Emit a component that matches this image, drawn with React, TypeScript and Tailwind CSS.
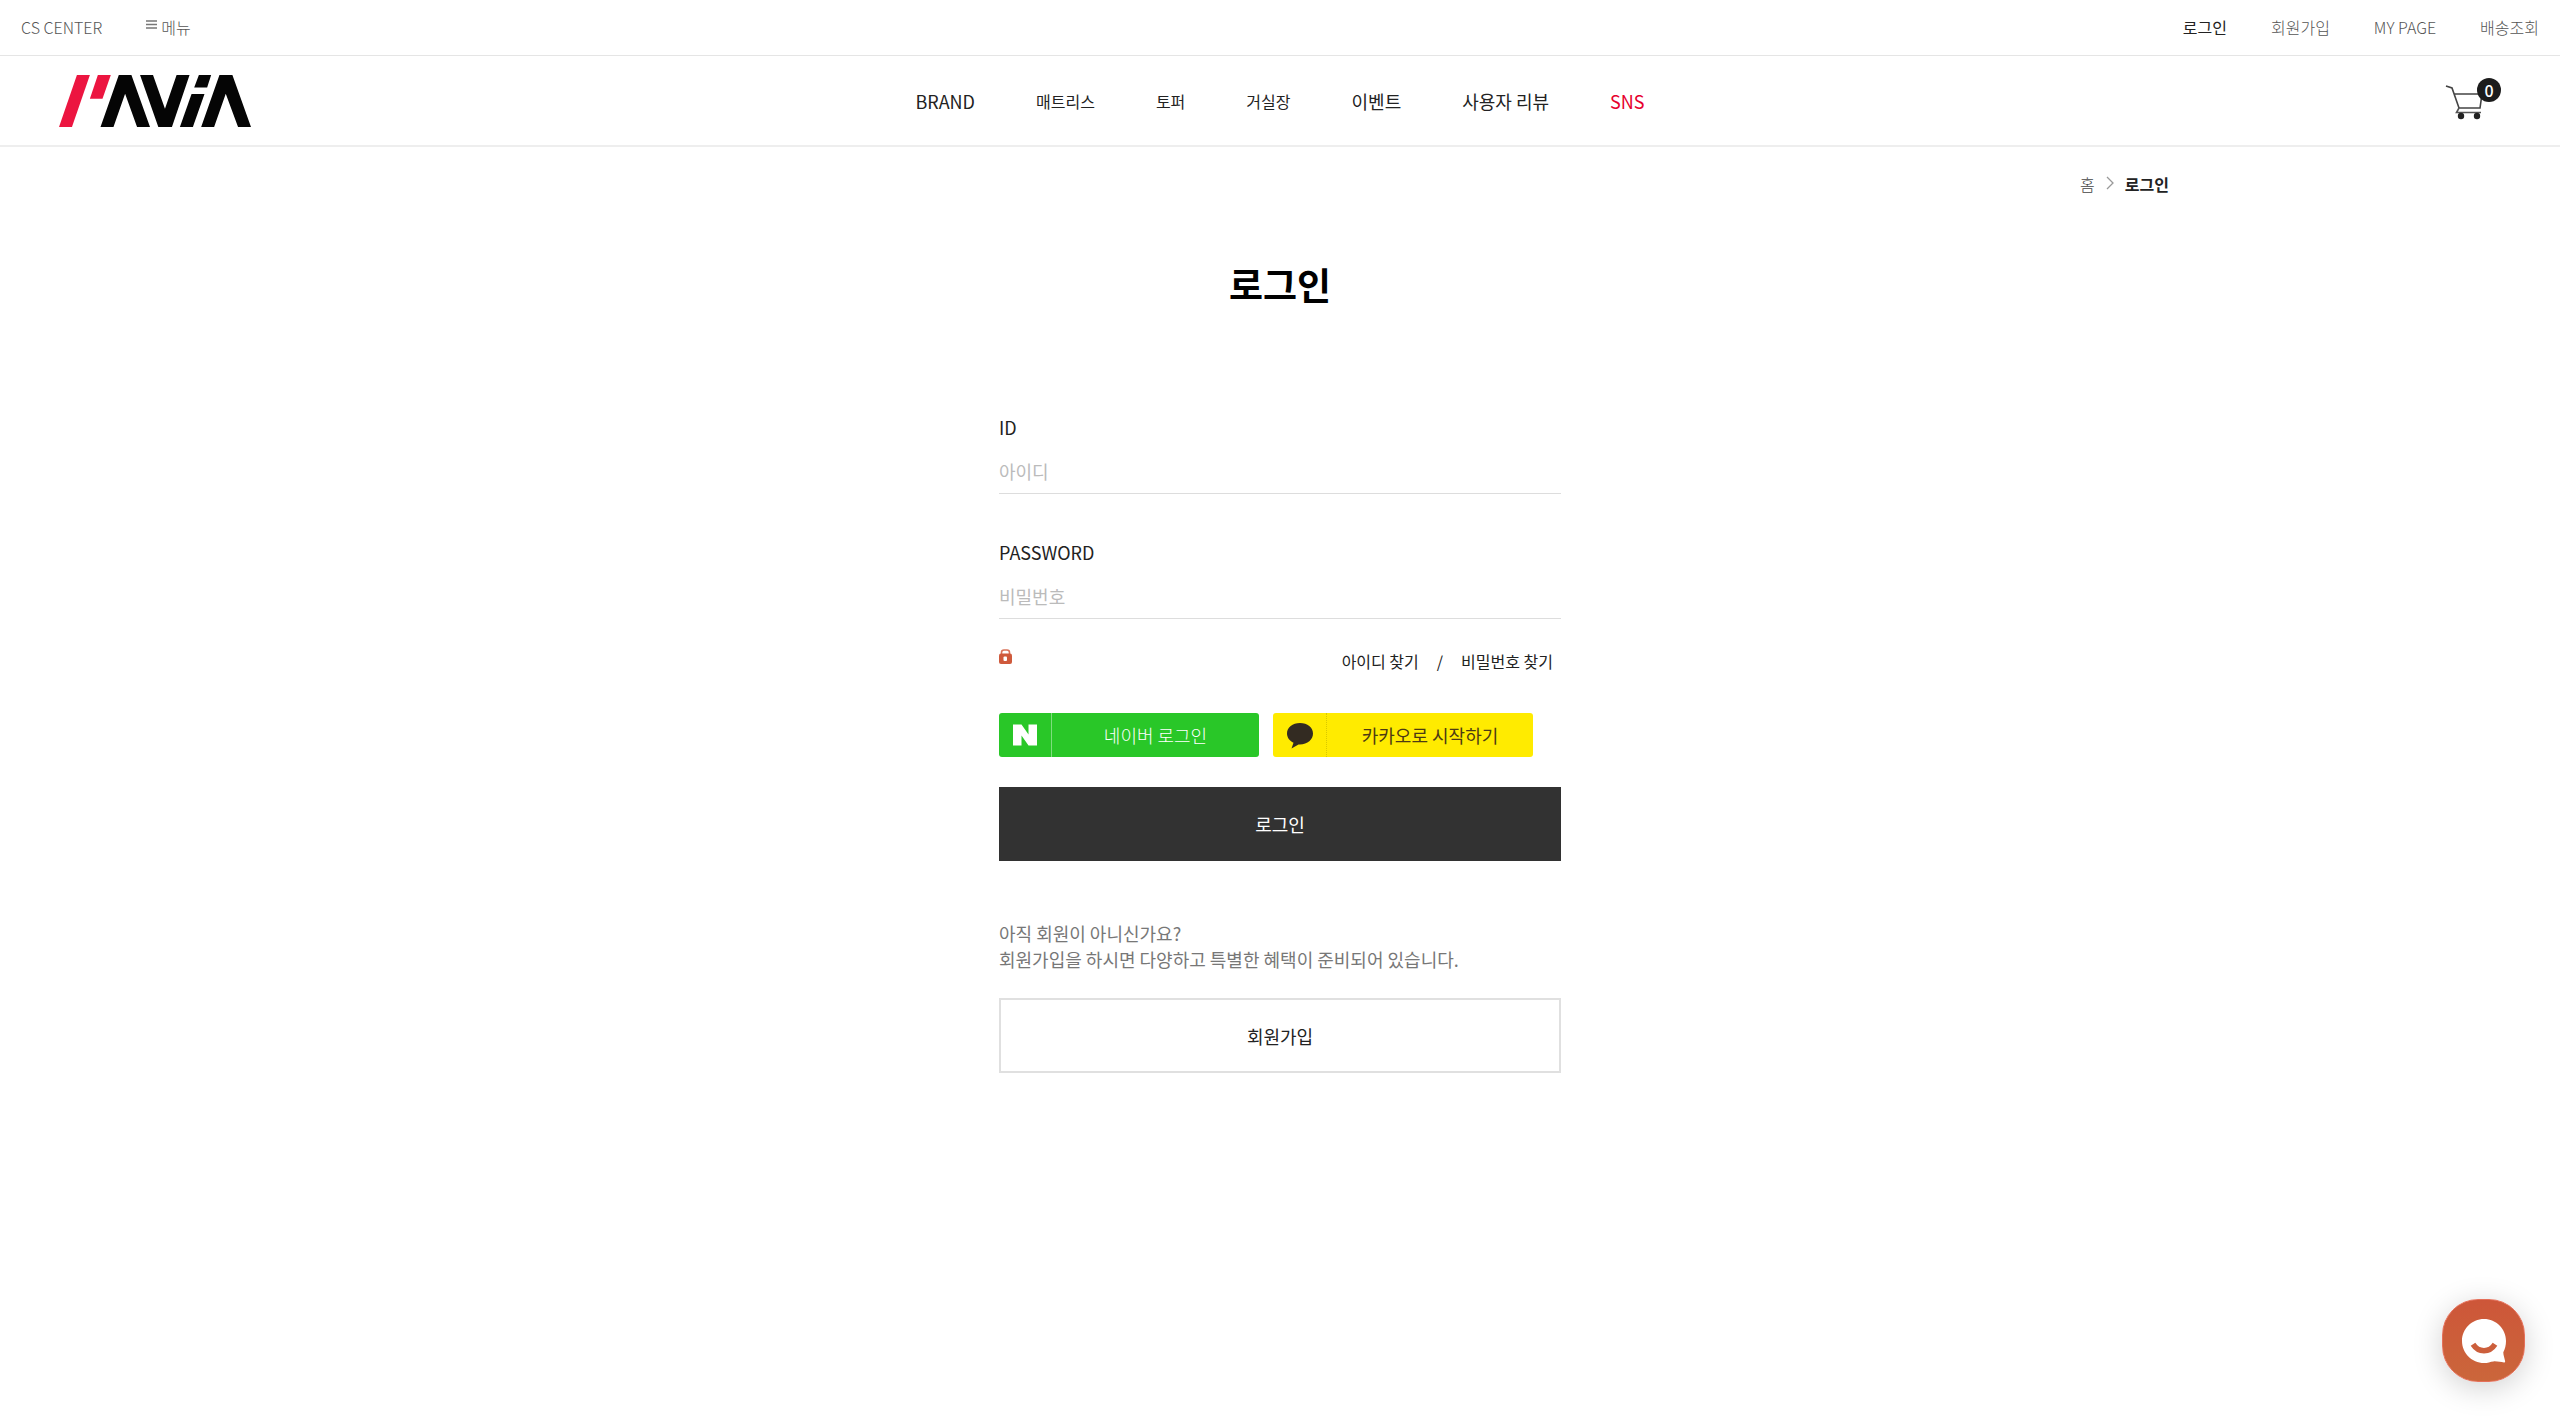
import React from "react";

type NavItem = { label: string; className: string };

const navItems: NavItem[] = [
  { label: "BRAND", className: "text-lg text-[#222]" },
  { label: "매트리스", className: "text-base text-[#222]" },
  { label: "토퍼", className: "text-base text-[#222]" },
  { label: "거실장", className: "text-base text-[#222]" },
  { label: "이벤트", className: "text-lg text-[#222]" },
  { label: "사용자 리뷰", className: "text-lg text-[#222]" },
  { label: "SNS", className: "text-lg text-[#e6002d]" },
];

const accountLinks: NavItem[] = [
  { label: "로그인", className: "text-[#222]" },
  { label: "회원가입", className: "font-light text-[#555]" },
  { label: "MY PAGE", className: "font-light text-[#555]" },
  { label: "배송조회", className: "font-light text-[#555]" },
];

function Logo() {
  return (
    <svg viewBox="178 224 578 156" className="h-[52px] w-[192px]" role="img" aria-label="L'AVIA">
      <g fill="#ec1540">
        <path d="M232 224H271L217 380H178Z" />
        <path d="M295 224H334L309 295H271Z" />
      </g>
      <g fill="#050505">
        <path d="M358 224H396L452 380H413L377 280L342 380H303Z" />
        <path d="M422 224H461L497 325L532 224H571L518 380H477Z" />
        <path d="M599 224H636L624 261H585Z" />
        <path d="M577 281H616L581 380H542Z" />
        <path d="M661 224H700L756 380H717L680 280L645 380H606Z" />
      </g>
    </svg>
  );
}

function CartIcon() {
  return (
    <svg viewBox="0 0 38 36" className="h-9 w-[38px]" fill="none" aria-hidden="true">
      <path d="M1 2L7 4L14 24H35L37 10H9" stroke="#444" strokeWidth="1.6" />
      <path d="M14 24L11.500 28.500H36" stroke="#555" strokeWidth="1.6" />
      <circle cx="16" cy="32" r="3.2" fill="#222" />
      <circle cx="32" cy="32" r="3.2" fill="#222" />
    </svg>
  );
}

function LockIcon() {
  return (
    <svg viewBox="0 0 13 15" className="h-[15px] w-[13px]" role="img" aria-label="보안접속">
      <path d="M2.500 6V3.500Q2.500 1 5 1H8Q10.500 1 10.500 3.500V6" fill="none" stroke="#d9735a" strokeWidth="1.6" />
      <rect y="4.500" width="13" height="10.500" rx="2" fill="#cf5a3c" />
      <rect x="4.500" y="7.500" width="3.500" height="4.500" rx="1" fill="#fff" />
    </svg>
  );
}

function ChatIcon() {
  return (
    <svg viewBox="0 0 46 46" className="h-[46px] w-[46px]" aria-hidden="true">
      <path
        d="M23 1C10.800 1 1 10.800 1 23s9.800 22 22 22c3.500 0 6.500-1.400 9.500-1.600c4-.2 7.500.8 10.500 1.100c1-.1 1.300-.7 1.100-1.600c-.6-3-1.800-5.700-1.800-8.600C44 31 45 27 45 23C45 10.800 35.200 1 23 1Z"
        fill="#fff"
      />
      <path d="M12 26.200C17.500 34.800 28.500 34.800 34 26.200" fill="none" stroke="#cc5f3c" strokeWidth="5.500" />
    </svg>
  );
}

function Field({ id, label, type, placeholder }: { id: string; label: string; type: string; placeholder: string }) {
  return (
    <div>
      <label htmlFor={id} className="block text-lg leading-[26px] text-[#222]">
        {label}
      </label>
      <input
        id={id}
        type={type}
        placeholder={placeholder}
        className="mt-[9px] block h-[45px] w-full border-b border-[#ddd] bg-transparent text-lg text-[#222] outline-none placeholder:text-[#bbb]"
      />
    </div>
  );
}

export default function App() {
  return (
    <div className="min-h-screen bg-white font-['Noto_Sans_CJK_KR',sans-serif] text-[#222]">
      <div className="flex h-14 items-center justify-between border-b border-[#e5e5e5] px-[21px] pb-0.5 text-base">
        <div className="flex items-center gap-11 font-light text-[#555]">
          <a href="#cs">CS CENTER</a>
          <button type="button" className="flex items-center gap-1">
            <svg viewBox="0 0 11 9" className="mb-1 h-[9px] w-[11px]" aria-hidden="true">
              <path d="M0 1H11M0 4.500H11M0 8H11" stroke="#777" strokeWidth="1.400" />
            </svg>
            메뉴
          </button>
        </div>
        <div className="flex items-center gap-11">
          {accountLinks.map((l) => (
            <a key={l.label} href="#account" className={l.className}>
              {l.label}
            </a>
          ))}
        </div>
      </div>

      <header className="grid h-[91px] grid-cols-[1fr_auto_1fr] items-center border-b-2 border-[#eee] px-[59px]">
        <a href="#home" className="justify-self-start">
          <Logo />
        </a>
        <nav className="flex items-center gap-[61px]">
          {navItems.map((n) => (
            <a key={n.label} href="#nav" className={n.className}>
              {n.label}
            </a>
          ))}
        </nav>
        <a href="#cart" aria-label="장바구니" className="relative w-14 justify-self-end pt-0.5">
          <CartIcon />
          <span className="absolute -top-1 right-0 flex size-6 items-center justify-center rounded-full bg-[#1c1c1c] text-base font-medium text-white">
            0
          </span>
        </a>
      </header>

      <main>
        <div className="mx-auto flex max-w-[1778px] items-center justify-end pt-[25px] text-base">
          <a href="#home" className="font-light text-[#444]">
            홈
          </a>
          <svg viewBox="0 0 8 14" className="mx-[11px] mb-0.5 h-3.5 w-2" fill="none" aria-hidden="true">
            <path d="M1 1L7 7L1 13" stroke="#999" strokeWidth="1.300" />
          </svg>
          <strong className="font-bold text-[#222]">로그인</strong>
        </div>
        <h1 className="mt-[61px] text-center text-[37px] leading-[54px] font-bold text-black">로그인</h1>

        <form className="mx-auto mt-[103px] w-full max-w-[562px]" onSubmit={(e: React.FormEvent) => e.preventDefault()}>
          <div className="flex flex-col gap-[45px]">
            <Field id="member-id" label="ID" type="text" placeholder="아이디" />
            <Field id="member-password" label="PASSWORD" type="password" placeholder="비밀번호" />
          </div>

          <div className="mt-[30px] flex h-6 items-start justify-between">
            <LockIcon />
            <div className="flex gap-[18px] pr-2 text-base">
              <a href="#find-id">아이디 찾기</a>
              <span>/</span>
              <a href="#find-password">비밀번호 찾기</a>
            </div>
          </div>

          <div className="mt-10 flex gap-3.5">
            <button type="button" className="flex h-11 w-[260px] items-stretch rounded-[3px] bg-[#29c728] text-lg font-light text-white">
              <span className="flex w-[53px] items-center justify-center border-r border-[#7fdd7e]">
                <svg viewBox="0 0 24 22" className="h-[22px] w-6" aria-hidden="true">
                  <path d="M0 0.500H8.500L15.500 10.500V0.500H24V21.500H15.500L8.500 11.500V21.500H0Z" fill="#fff" />
                </svg>
              </span>
              <span className="flex flex-1 items-center justify-center">네이버 로그인</span>
            </button>
            <button type="button" className="flex h-11 w-[260px] items-stretch rounded-[3px] bg-[#ffeb00] text-lg text-[#4c3a14]">
              <span className="flex w-[54px] items-center justify-center border-r border-dotted border-[#d9c800]">
                <svg viewBox="0 0 28 27" className="h-[27px] w-7" aria-hidden="true">
                  <path
                    d="M14 1C6.500 1 1 5.500 1 11.500c0 4 2.600 7.300 6.500 9.200L5.500 26.500L12.500 22.400c8.500.6 14.500-4.500 14.500-10.900C27 5.500 21.500 1 14 1Z"
                    fill="#332b22"
                  />
                </svg>
              </span>
              <span className="flex flex-1 items-center justify-center">카카오로 시작하기</span>
            </button>
          </div>

          <button type="submit" className="mt-[30px] block h-[74px] w-full bg-[#323232] text-lg text-white">
            로그인
          </button>

          <p className="mt-[59px] text-lg leading-[26px] text-[#777]">
            아직 회원이 아니신가요?
            <br />
            회원가입을 하시면 다양하고 특별한 혜택이 준비되어 있습니다.
          </p>
          <button type="button" className="mt-[26px] block h-[75px] w-full border-2 border-[#e0e0e0] bg-white text-lg text-[#222]">
            회원가입
          </button>
        </form>
      </main>

      <button
        type="button"
        aria-label="채팅 상담"
        className="fixed right-[35px] bottom-9 flex size-[83px] items-center justify-center rounded-[36px] border border-[#e5705a] bg-linear-to-b from-[#cd5639] to-[#cb663b] shadow-[0_6px_30px_rgba(0,0,0,0.18)]"
      >
        <ChatIcon />
      </button>
    </div>
  );
}
